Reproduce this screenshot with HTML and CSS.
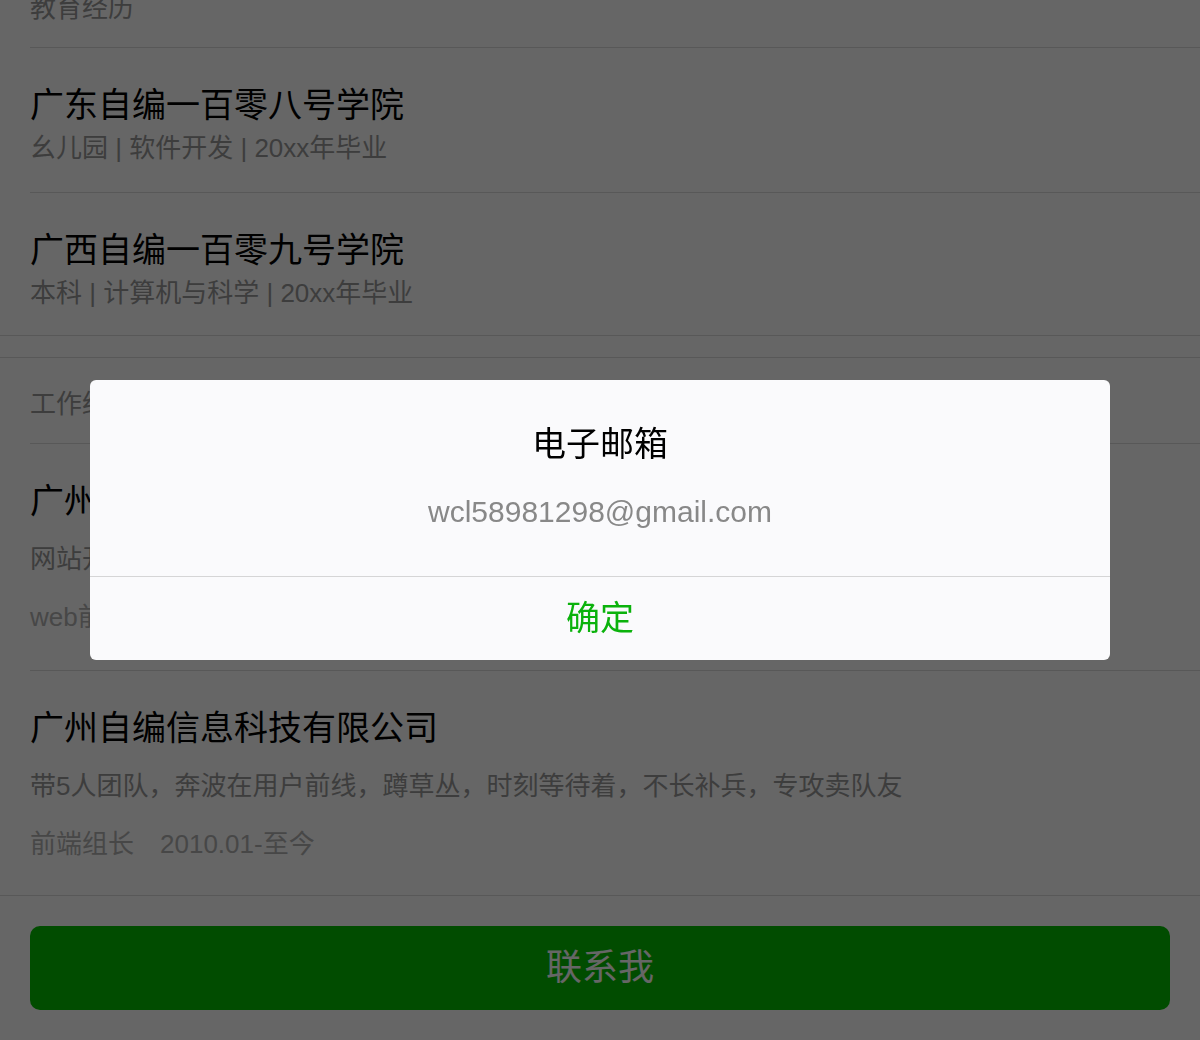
FILE: index.html
```html
<!DOCTYPE html>
<html lang="zh-CN">
<head>
<meta charset="utf-8">
<title>简历</title>
<link rel="stylesheet" href="styles.css">
</head>
<body>
<div class="page">
  <section class="cells">
    <div class="cell-title">教育经历</div>
    <div class="cell">
      <div class="cell-name">广东自编一百零八号学院</div>
      <div class="cell-sub">幺儿园 | 软件开发 | 20xx年毕业</div>
    </div>
    <div class="cell">
      <div class="cell-name">广西自编一百零九号学院</div>
      <div class="cell-sub">本科 | 计算机与科学 | 20xx年毕业</div>
    </div>
  </section>

  <section class="cells cells-gap">
    <div class="cell-title">工作经历</div>
    <div class="cell cell-work">
      <div class="cell-name">广州自编网络科技有限公司</div>
      <div class="cell-desc">网站开发，负责前端页面与交互实现</div>
      <div class="cell-meta">web前端工程师<span class="date">2008.07-2010.01</span></div>
    </div>
    <div class="cell cell-work">
      <div class="cell-name">广州自编信息科技有限公司</div>
      <div class="cell-desc">带5人团队，奔波在用户前线，蹲草丛，时刻等待着，不长补兵，专攻卖队友</div>
      <div class="cell-meta">前端组长<span class="date">2010.01-至今</span></div>
    </div>
  </section>

  <div class="btn-area">
    <a class="btn-primary">联系我</a>
  </div>
</div>

<div class="mask"></div>
<div class="dialog-wrap">
  <div class="dialog">
    <div class="dialog-hd">电子邮箱</div>
    <div class="dialog-bd">wcl58981298@gmail.com</div>
    <div class="dialog-ft"><a class="dialog-btn">确定</a></div>
  </div>
</div>
</body>
</html>
```

FILE: styles.css
```css
html, body {
  margin: 0;
  padding: 0;
  background: #ffffff;
  overflow: hidden;
  height: 1040px;
}

body {
  font-family: "Liberation Sans", "Noto Sans CJK SC", sans-serif;
  color: #000;
}

.page {
  margin-top: -38px;
}

.cells {
  background: #fff;
  border-bottom: 1px solid #dcdcdc;
}

.cells-gap {
  margin-top: 21px;
  border-top: 1px solid #dcdcdc;
}

.cell-title {
  margin-left: 30px;
  padding: 28px 0 21px;
  line-height: 36px;
  font-size: 26px;
  color: #999;
}

.cell {
  margin-left: 30px;
  border-top: 1px solid #dcdcdc;
  padding: 34px 30px 24px 0;
}

.cell:last-child {
  padding-bottom: 22px;
}

.cell-name {
  font-size: 34px;
  line-height: 46px;
  color: #000;
}

.cell-sub {
  font-size: 26px;
  line-height: 40px;
  color: #999;
}

.cell-work {
  padding-bottom: 33px;
}

.cell-work:last-child {
  padding-bottom: 31px;
}

.cell-desc {
  margin-top: 15px;
  font-size: 26px;
  line-height: 40px;
  color: #999;
}

.cell-meta {
  margin-top: 18px;
  font-size: 26px;
  line-height: 40px;
  color: #b2b2b2;
}

.date {
  margin-left: 26px;
}

.btn-area {
  padding: 30px 30px 0;
}

.btn-primary {
  display: block;
  height: 84px;
  line-height: 84px;
  border-radius: 10px;
  background: #04be02;
  color: #fff;
  text-align: center;
  font-size: 36px;
}

.mask {
  position: fixed;
  inset: 0;
  background: rgba(0, 0, 0, 0.6);
}

.dialog-wrap {
  position: fixed;
  inset: 0;
  display: flex;
  align-items: center;
  justify-content: center;
}

.dialog {
  width: 1020px;
  background: #fafafc;
  border-radius: 6px;
  overflow: hidden;
  text-align: center;
}

.dialog-hd {
  padding-top: 40px;
  font-size: 34px;
  line-height: 48px;
  color: #000;
}

.dialog-bd {
  padding: 22px 20px 42px;
  font-size: 30px;
  line-height: 44px;
  color: #888;
}

.dialog-ft {
  border-top: 1px solid #d5d5d6;
}

.dialog-btn {
  display: block;
  height: 83px;
  line-height: 83px;
  font-size: 34px;
  color: #0bb20c;
}
```
